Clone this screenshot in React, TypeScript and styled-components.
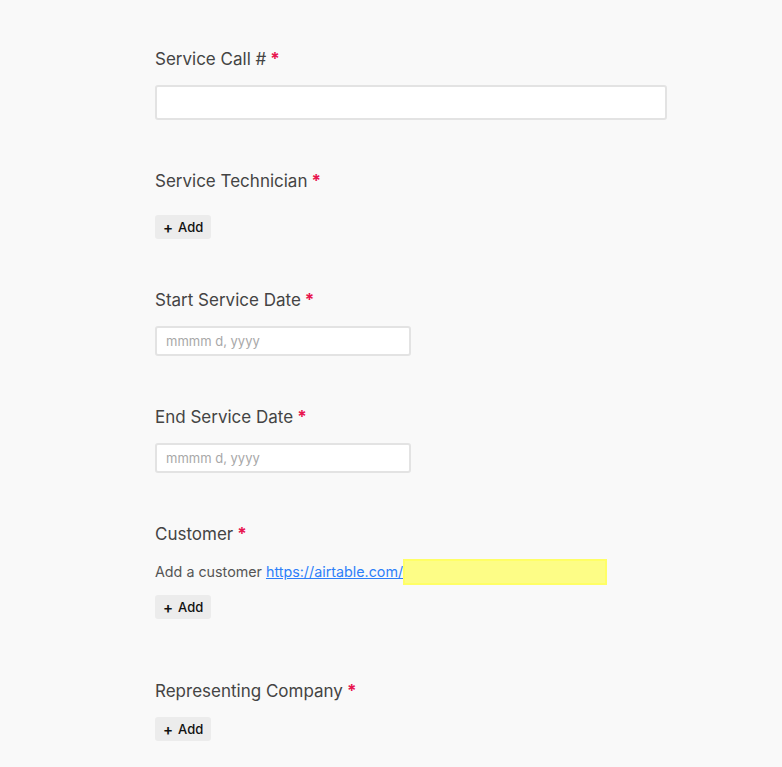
import React from 'react';
import styled, { createGlobalStyle } from 'styled-components';

const GlobalStyle = createGlobalStyle`
    html, body {
        margin: 0;
        padding: 0;
        background: #f9f9f9;
    }
    body {
        font-family: Inter, 'Liberation Sans', Arial, sans-serif;
        color: #444;
    }
`;

const Form = styled.div`
    display: flex;
    flex-direction: column;
    width: 512px;
    padding: 47px 0 0 155px;
`;

const Field = styled.div<{ $after?: number }>`
    display: flex;
    flex-direction: column;
    align-items: flex-start;
    margin-bottom: ${({ $after }) => ($after ?? 49)}px;
`;

const Label = styled.div`
    font-size: 17px;
    line-height: 24px;
    color: #444;
    margin-bottom: 14px;
`;

const Star = styled.span`
    color: #e8164f;
    font-weight: bold;
    margin-left: 4px;
`;

const TextInput = styled.input<{ $wide?: boolean }>`
    box-sizing: border-box;
    width: ${({ $wide }) => ($wide ? '512px' : '256px')};
    height: ${({ $wide }) => ($wide ? '35px' : '30px')};
    border: 2px solid #e3e3e3;
    border-radius: 3px;
    background: #fff;
    padding: 0 9px;
    font-family: inherit;
    font-size: 13px;
    color: #333;
    outline: none;

    &::placeholder {
        color: #a8a8a8;
    }
`;

const AddButton = styled.button<{ $top?: number }>`
    display: inline-flex;
    align-items: center;
    gap: 5px;
    height: 24px;
    margin-top: ${({ $top }) => ($top ?? 0)}px;
    padding: 0 8px;
    border: none;
    border-radius: 3px;
    background: #ececec;
    font-family: inherit;
    font-size: 13px;
    font-weight: 500;
    color: #111;
    cursor: pointer;
`;

const Plus = styled.span`
    font-size: 15px;
    font-weight: 600;
    line-height: 1;
`;

const Description = styled.div`
    display: flex;
    align-items: center;
    font-size: 14.3px;
    line-height: 26px;
    color: #555;
    margin-top: -1px;
    margin-bottom: 10px;
`;

const Link = styled.a`
    color: #2d7ff9;
    text-decoration: underline;
    margin-left: 4px;
`;

const Highlight = styled.span`
    display: inline-block;
    box-sizing: border-box;
    width: 204px;
    height: 26px;
    background: #fdfd86;
    border: 2px solid #ffff66;
`;

const Add: React.FC<{ top?: number }> = ({ top }) => (
    <AddButton $top={top}>
        <Plus>+</Plus>
        Add
    </AddButton>
);

const App: React.FC = () => {
    return (
        <>
            <GlobalStyle />
            <Form>
                <Field>
                    <Label>
                        Service Call #<Star>*</Star>
                    </Label>
                    <TextInput $wide />
                </Field>

                <Field>
                    <Label>
                        Service Technician<Star>*</Star>
                    </Label>
                    <Add top={8} />
                </Field>

                <Field>
                    <Label>
                        Start Service Date<Star>*</Star>
                    </Label>
                    <TextInput placeholder="mmmm d, yyyy" />
                </Field>

                <Field>
                    <Label>
                        End Service Date<Star>*</Star>
                    </Label>
                    <TextInput placeholder="mmmm d, yyyy" />
                </Field>

                <Field $after={60}>
                    <Label>
                        Customer<Star>*</Star>
                    </Label>
                    <Description>
                        Add a customer
                        <Link href="#">https://airtable.com/</Link>
                        <Highlight />
                    </Description>
                    <Add />
                </Field>

                <Field>
                    <Label>
                        Representing Company<Star>*</Star>
                    </Label>
                    <Add />
                </Field>
            </Form>
        </>
    );
};

export default App;
